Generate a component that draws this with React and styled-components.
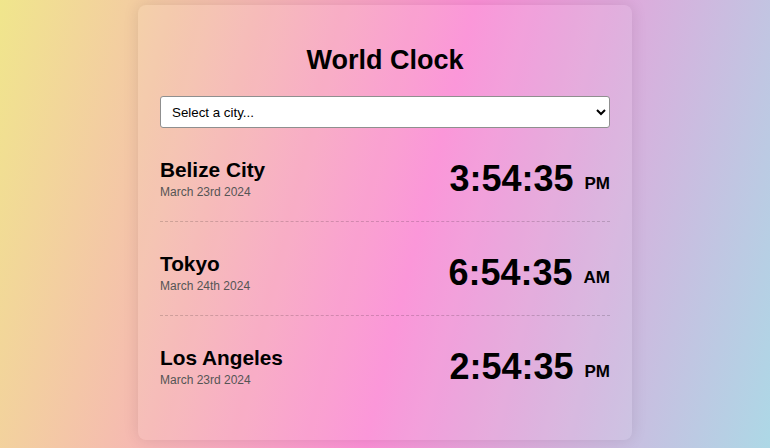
import React from 'react';
import styled, { createGlobalStyle } from 'styled-components';

const GlobalStyle = createGlobalStyle`
  html, body {
    margin: 0;
    padding: 0;
  }
  body {
    min-height: 100vh;
    font-family: "Liberation Sans", Arial, sans-serif;
    background: linear-gradient(104deg, #f0e68c 0%, #fb8fd6 54%, #add8e6 100%);
  }
`

const Page = styled.div`
  display: flex;
  justify-content: center;
  padding-top: 5px;
  min-height: 100vh;
  box-sizing: border-box;
`

const Card = styled.div`
  width: 450px;
  padding: 40px 22px 31px;
  border-radius: 8px;
  background: rgba(255, 255, 255, 0.08);
  box-shadow: 0 0 16px rgba(0, 0, 0, 0.1);
  align-self: flex-start;
`

const Title = styled.h1`
  margin: 0 0 20px;
  font-size: 27px;
  line-height: 31px;
  font-weight: bold;
  text-align: center;
  color: #000;
`

const CitySelect = styled.select`
  display: block;
  width: 100%;
  height: 32px;
  padding: 0 7px;
  font-family: "Liberation Sans", Arial, sans-serif;
  font-size: 13.33px;
  color: #000;
  background: #fff;
  border: 1px solid #8f8f8f;
  border-radius: 3px;
  box-sizing: border-box;
`

const Row = styled.div`
  display: flex;
  justify-content: space-between;
  align-items: flex-start;
  padding: 30px 0 22px;
  border-bottom: ${p => (p.last ? 'none' : '1px dashed rgba(0, 0, 0, 0.16)')};
`

const Place = styled.div`
  display: flex;
  flex-direction: column;
`

const CityName = styled.div`
  font-size: 20.8px;
  line-height: 24px;
  font-weight: bold;
  color: #000;
`

const DateText = styled.div`
  margin-top: 3px;
  font-size: 12px;
  line-height: 14px;
  color: #555;
`

const Clock = styled.div`
  display: flex;
  align-items: baseline;
  gap: 11px;
`

const Time = styled.span`
  font-size: 36px;
  line-height: 41px;
  font-weight: bold;
  color: #000;
`

const Meridiem = styled.span`
  font-size: 17px;
  font-weight: bold;
  color: #000;
  position: relative;
  top: -2px;
`

const cities = [
  { name: 'Belize City', date: 'March 23rd 2024', time: '3:54:35', ampm: 'PM' },
  { name: 'Tokyo', date: 'March 24th 2024', time: '6:54:35', ampm: 'AM' },
  { name: 'Los Angeles', date: 'March 23rd 2024', time: '2:54:35', ampm: 'PM' },
];

export default function App() {
  return (
    <Page>
      <GlobalStyle />
      <Card>
        <Title>World Clock</Title>
        <CitySelect defaultValue="">
          <option value="">Select a city...</option>
          <option value="london">London</option>
          <option value="paris">Paris</option>
          <option value="sydney">Sydney</option>
        </CitySelect>
        {cities.map((c, i) => (
          <Row key={c.name} last={i === cities.length - 1}>
            <Place>
              <CityName>{c.name}</CityName>
              <DateText>{c.date}</DateText>
            </Place>
            <Clock>
              <Time>{c.time}</Time>
              <Meridiem>{c.ampm}</Meridiem>
            </Clock>
          </Row>
        ))}
      </Card>
    </Page>
  );
}
